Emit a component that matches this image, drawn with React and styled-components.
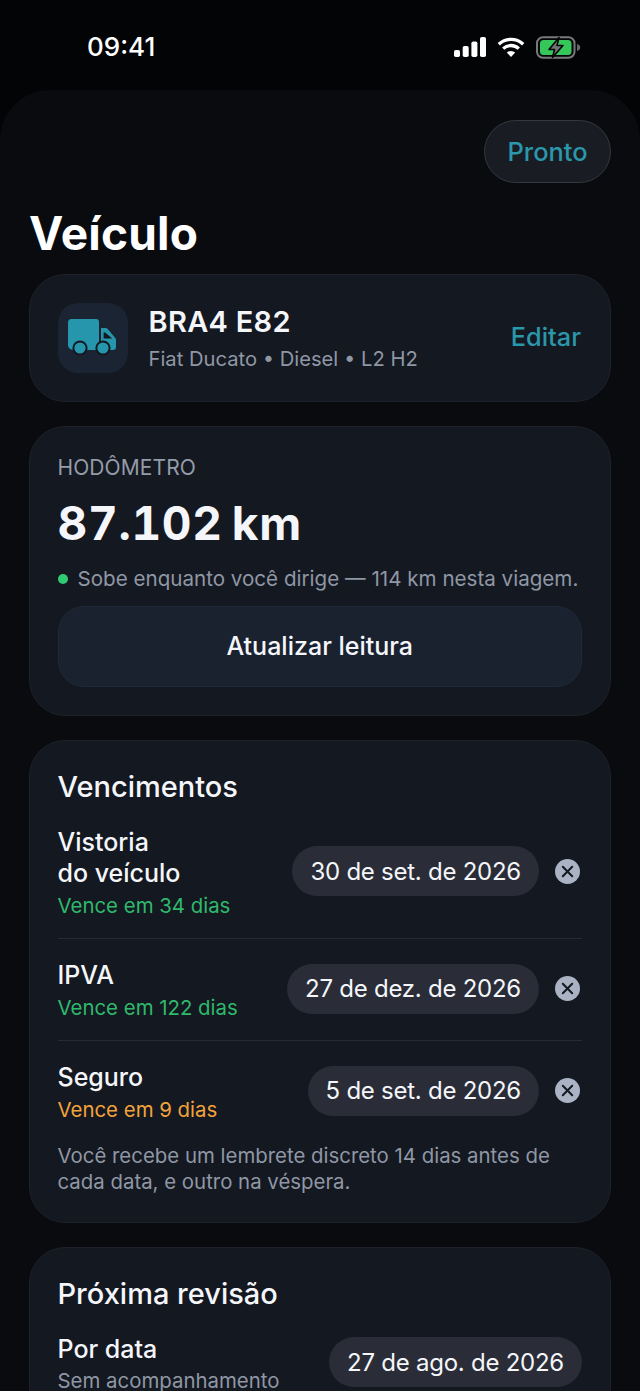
import React from "react";
import styled, { createGlobalStyle } from "styled-components";

const Global = createGlobalStyle`
  html, body { margin: 0; padding: 0; background: #030405; height: 1391px; overflow: hidden; }
  #root { height: 1391px; overflow: hidden; }
  * { box-sizing: border-box; }
  body { font-family: Inter, "Liberation Sans", sans-serif; color: #f4f6fa; -webkit-font-smoothing: antialiased; }
`;

const Screen = styled.div`
  width: 640px; height: 1391px; overflow: hidden; display: flex; flex-direction: column;
  background: #030405;
`;
const StatusBar = styled.div`
  height: 90px; flex: none; display: flex; align-items: flex-start; justify-content: space-between;
  padding: 31px 59px 0 87px;
`;
const Clock = styled.div`
  font-size: 26px; line-height: 32px; font-weight: 500; color: #fff; letter-spacing: 0;
`;
const StatusIcons = styled.div`
  display: flex; align-items: center; gap: 11px; height: 32px;
`;
const Sheet = styled.div`
  flex: 1; background: #090b0f; border-radius: 50px 50px 0 0; padding: 30px 29px 0;
  display: flex; flex-direction: column;
`;
const TopRow = styled.div`
  display: flex; justify-content: flex-end;
`;
const DoneButton = styled.div`
  width: 127px; height: 63px; border-radius: 32px; background: #191d23; border: 1.5px solid #33383f;
  display: flex; align-items: center; justify-content: center; font-size: 25.4px; font-weight: 500; color: #2b97ab;
`;
const Title = styled.h1`
  margin: 20px 0 10.5px 0; font-size: 46px; line-height: 60px; font-weight: 700; color: #fff; letter-spacing: 0.2px;
`;
const Cards = styled.div`
  display: flex; flex-direction: column; gap: 24px;
`;
const Card = styled.section`
  background: #141820; border: 1.5px solid #1c212b; border-radius: 36px; padding: 28px 28px ${p => p.$bottom || 28}px 27.5px;
`;
const VehicleRow = styled.div`
  display: flex; align-items: center; gap: 21px;
`;
const IconTile = styled.div`
  width: 70px; height: 70px; border-radius: 20px; background: #1a2433; display: flex; align-items: center; justify-content: center; flex: none;
`;
const VehicleInfo = styled.div`
  flex: 1; display: flex; flex-direction: column; gap: 5px; margin-bottom: 1px;
`;
const Plate = styled.div`
  font-size: 29px; line-height: 38px; font-weight: 600; color: #f4f6fa; letter-spacing: 0.3px;
`;
const Muted = styled.div`
  font-size: ${p => p.$size || 20.2}px; line-height: 26px; color: #8f97a5; font-weight: 400; white-space: nowrap;
`;
const EditLink = styled.div`
  font-size: 25.3px; font-weight: 500; color: #2b97ab; margin: 0 1px 2px 0;
`;
const Overline = styled.div`
  font-size: 21px; line-height: 26px; color: #959ca9; letter-spacing: 0.1px;
`;
const Odometer = styled.div`
  font-size: 46px; line-height: 58px; font-weight: 700; color: #f4f6fa; margin-top: 13px;
  font-variant-numeric: tabular-nums; letter-spacing: 0.7px; word-spacing: -4px;
`;
const OdoNote = styled.div`
  display: flex; align-items: center; gap: 10px; margin-top: 14px;
`;
const Dot = styled.span`
  width: 10px; height: 10px; border-radius: 50%; background: #2fcb73; flex: none;
`;
const UpdateButton = styled.div`
  margin-top: 14px; height: 81px; border-radius: 26px; background: #1a2230; border: 1.5px solid #20293a;
  display: flex; align-items: center; justify-content: center; font-size: 25px; font-weight: 500; color: #f4f6fa;
`;
const SectionTitle = styled.h2`
  margin: 0; font-size: 29px; line-height: 36px; font-weight: 500; color: #f4f6fa;
`;
const DueList = styled.div`
  display: flex; flex-direction: column;
`;
const DueRow = styled.div`
  display: flex; align-items: center; gap: 16px; padding: ${p => p.$first ? "20px 0 17px" : "19px 0 17px"};
  border-bottom: ${p => p.$last ? "none" : "1.5px solid #262b35"};
`;
const DueText = styled.div`
  flex: 1; min-width: 0; margin-top: 2px;
`;
const DueName = styled.div`
  font-size: 25px; line-height: 31px; font-weight: 500; color: #f4f6fa;
`;
const statusColors = { ok: "#2fb96d", warn: "#f2a33c", muted: "#8f97a5" };
const DueStatus = styled.div`
  font-size: 20.4px; line-height: 30px; margin-top: ${p => p.$tone === "muted" ? 1 : 2}px;
  color: ${p => statusColors[p.$tone || "ok"]}; white-space: nowrap;
`;
const DatePill = styled.div`
  height: 50px; padding: 0 18px; border-radius: 25px; background: #2a2d37; display: flex; align-items: center;
  font-size: 24px; letter-spacing: -0.25px; color: #f4f6fa; white-space: nowrap; flex: none; margin-bottom: 3px;
`;
const ClearButton = styled.div`
  width: 25px; height: 25px; border-radius: 50%; background: #a9b3c3; display: flex; align-items: center; justify-content: center; margin: 0 2px 3px 0; flex: none;
`;
const Hint = styled.p`
  margin: 1px 0 0; font-size: 20.4px; line-height: 26px; color: #8f97a5;
`;

function Truck() {
  return (
    <svg width="49" height="37" viewBox="0 0 49 37" fill="none">
      <path d="M3.5 0h24.5a3 3 0 0 1 3 3v28H5a5 5 0 0 1-5-5V3.5A3.5 3.5 0 0 1 3.5 0z" fill="#2596ab" />
      <path d="M33 9h4.5a3 3 0 0 1 2.2 1l7.2 8.6a4 4 0 0 1 1.1 2.7V28a3 3 0 0 1-3 3H33z" fill="#2596ab" />
      <path d="M35.6 13.5h1.6l7 6h-8.6z" fill="#141820" />
      <circle cx="12" cy="29" r="7.6" fill="#141820" />
      <circle cx="12" cy="29" r="5.6" fill="#2596ab" />
      <circle cx="35" cy="29" r="7.6" fill="#141820" />
      <circle cx="35" cy="29" r="5.6" fill="#2596ab" />
    </svg>
  );
}
function Signal() {
  return (
    <svg width="32" height="20" viewBox="0 0 32 20">
      <rect x="0" y="13" width="6" height="7" rx="1.8" fill="#fff" />
      <rect x="8.7" y="9" width="6" height="11" rx="1.8" fill="#fff" />
      <rect x="17.4" y="4.5" width="6" height="15.5" rx="1.8" fill="#fff" />
      <rect x="26" y="0" width="6" height="20" rx="1.8" fill="#fff" />
    </svg>
  );
}
function Wifi() {
  return (
    <svg width="28" height="20" viewBox="0 0 28 20" fill="none">
      <path d="M1.8 7.2a17.6 17.6 0 0 1 24.4 0" stroke="#fff" strokeWidth="3.3" />
      <path d="M6.2 11.6a11.4 11.4 0 0 1 15.6 0" stroke="#fff" strokeWidth="3.3" />
      <path d="M9.8 15.6a6.2 6.2 0 0 1 8.4 0L14 20z" fill="#fff" />
    </svg>
  );
}
function Battery() {
  return (
    <svg width="45" height="23" viewBox="0 0 45 23" fill="none">
      <rect x="1" y="1.2" width="37.5" height="20.6" rx="6" stroke="#767a7c" strokeWidth="2" />
      <rect x="4" y="4" width="31.5" height="15" rx="3.5" fill="#35c759" />
      <path d="M41 8c2 .5 3.2 1.8 3.2 3.5S43 14.5 41 15z" fill="#666a6c" />
      <path d="M23 1.5 13 13.5h5.5L16.5 21.5 27 9.5h-6z" fill="#6f7376" stroke="#030405" strokeWidth="1.6" strokeLinejoin="round" />
    </svg>
  );
}
function Cross() {
  return (
    <svg width="13" height="13" viewBox="0 0 13 13" fill="none">
      <path d="M1.8 1.8l9.4 9.4M11.2 1.8l-9.4 9.4" stroke="#141820" strokeWidth="2" strokeLinecap="round" />
    </svg>
  );
}

const dues = [
  { name: <>Vistoria<br />do veículo</>, status: "Vence em 34 dias", date: "30 de set. de 2026" },
  { name: "IPVA", status: "Vence em 122 dias", date: "27 de dez. de 2026" },
  { name: "Seguro", status: "Vence em 9 dias", date: "5 de set. de 2026", tone: "warn", last: true },
];

export default function App() {
  return (
    <Screen>
      <Global />
      <StatusBar>
        <Clock>09:41</Clock>
        <StatusIcons><Signal /><Wifi /><Battery /></StatusIcons>
      </StatusBar>
      <Sheet>
        <TopRow><DoneButton>Pronto</DoneButton></TopRow>
        <Title>Veículo</Title>
        <Cards>
          <Card>
            <VehicleRow>
              <IconTile><Truck /></IconTile>
              <VehicleInfo>
                <Plate>BRA4 E82</Plate>
                <Muted>Fiat Ducato • Diesel • L2 H2</Muted>
              </VehicleInfo>
              <EditLink>Editar</EditLink>
            </VehicleRow>
          </Card>
          <Card>
            <Overline>HODÔMETRO</Overline>
            <Odometer>87.102 km</Odometer>
            <OdoNote><Dot /><Muted $size={20.6}>Sobe enquanto você dirige — 114 km nesta viagem.</Muted></OdoNote>
            <UpdateButton>Atualizar leitura</UpdateButton>
          </Card>
          <Card $bottom={27}>
            <SectionTitle>Vencimentos</SectionTitle>
            <DueList>
              {dues.map((d, i) => (
                <DueRow key={i} $first={i === 0} $last={d.last}>
                  <DueText>
                    <DueName>{d.name}</DueName>
                    <DueStatus $tone={d.tone}>{d.status}</DueStatus>
                  </DueText>
                  <DatePill>{d.date}</DatePill>
                  <ClearButton><Cross /></ClearButton>
                </DueRow>
              ))}
            </DueList>
            <Hint>Você recebe um lembrete discreto 14 dias antes de cada data, e outro na véspera.</Hint>
          </Card>
          <Card>
            <SectionTitle>Próxima revisão</SectionTitle>
            <DueRow $first $last>
              <DueText>
                <DueName>Por data</DueName>
                <DueStatus $tone="muted">Sem acompanhamento</DueStatus>
              </DueText>
              <DatePill>27 de ago. de 2026</DatePill>
            </DueRow>
          </Card>
        </Cards>
      </Sheet>
    </Screen>
  );
}
